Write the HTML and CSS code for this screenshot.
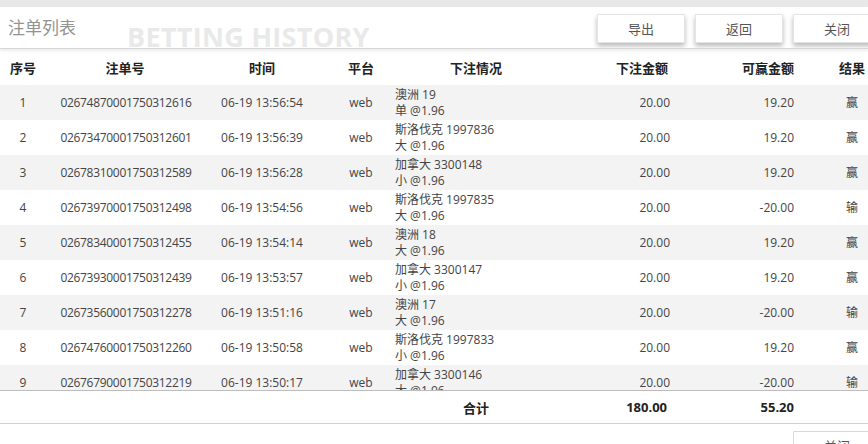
FILE: index.html
```html
<!DOCTYPE html>
<html lang="zh">
<head>
<meta charset="utf-8">
<title>注单列表</title>
<link rel="stylesheet" href="styles.css">
</head>
<body>
<div class="topbar"></div>
<div class="header">
  <div class="title">注单列表</div>
  <div class="watermark">BETTING HISTORY</div>
  <div class="spacer"></div>
  <div class="actions">
    <button class="btn">导出</button>
    <button class="btn">返回</button>
    <button class="btn">关闭</button>
  </div>
</div>
<table class="grid head">
  <colgroup><col class="c1"><col class="c2"><col class="c3"><col class="c4"><col class="c5"><col class="c6"><col class="c7"><col class="c8"></colgroup>
  <thead>
    <tr><th>序号</th><th>注单号</th><th>时间</th><th class="plat">平台</th><th>下注情况</th><th class="num">下注金额</th><th class="num">可赢金额</th><th>结果</th></tr>
  </thead>
</table>
<div class="scroll">
<table class="grid body">
  <colgroup><col class="c1"><col class="c2"><col class="c3"><col class="c4"><col class="c5"><col class="c6"><col class="c7"><col class="c8"></colgroup>
  <tbody>
    <tr><td>1</td><td class="no">02674870001750312616</td><td>06-19 13:56:54</td><td class="plat">web</td><td class="bet"><span>澳洲 19</span><span>单 @1.96</span></td><td class="num">20.00</td><td class="num">19.20</td><td>赢</td></tr>
    <tr><td>2</td><td class="no">02673470001750312601</td><td>06-19 13:56:39</td><td class="plat">web</td><td class="bet"><span>斯洛伐克 1997836</span><span>大 @1.96</span></td><td class="num">20.00</td><td class="num">19.20</td><td>赢</td></tr>
    <tr><td>3</td><td class="no">02678310001750312589</td><td>06-19 13:56:28</td><td class="plat">web</td><td class="bet"><span>加拿大 3300148</span><span>小 @1.96</span></td><td class="num">20.00</td><td class="num">19.20</td><td>赢</td></tr>
    <tr><td>4</td><td class="no">02673970001750312498</td><td>06-19 13:54:56</td><td class="plat">web</td><td class="bet"><span>斯洛伐克 1997835</span><span>大 @1.96</span></td><td class="num">20.00</td><td class="num">-20.00</td><td>输</td></tr>
    <tr><td>5</td><td class="no">02678340001750312455</td><td>06-19 13:54:14</td><td class="plat">web</td><td class="bet"><span>澳洲 18</span><span>大 @1.96</span></td><td class="num">20.00</td><td class="num">19.20</td><td>赢</td></tr>
    <tr><td>6</td><td class="no">02673930001750312439</td><td>06-19 13:53:57</td><td class="plat">web</td><td class="bet"><span>加拿大 3300147</span><span>小 @1.96</span></td><td class="num">20.00</td><td class="num">19.20</td><td>赢</td></tr>
    <tr><td>7</td><td class="no">02673560001750312278</td><td>06-19 13:51:16</td><td class="plat">web</td><td class="bet"><span>澳洲 17</span><span>大 @1.96</span></td><td class="num">20.00</td><td class="num">-20.00</td><td>输</td></tr>
    <tr><td>8</td><td class="no">02674760001750312260</td><td>06-19 13:50:58</td><td class="plat">web</td><td class="bet"><span>斯洛伐克 1997833</span><span>小 @1.96</span></td><td class="num">20.00</td><td class="num">19.20</td><td>赢</td></tr>
    <tr><td>9</td><td class="no">02676790001750312219</td><td>06-19 13:50:17</td><td class="plat">web</td><td class="bet"><span>加拿大 3300146</span><span>大 @1.96</span></td><td class="num">20.00</td><td class="num">-20.00</td><td>输</td></tr>
  </tbody>
</table>
</div>
<table class="grid foot">
  <colgroup><col class="c1"><col class="c2"><col class="c3"><col class="c4"><col class="c5"><col class="c6"><col class="c7"><col class="c8"></colgroup>
  <tbody>
    <tr><td></td><td></td><td></td><td></td><td class="total">合计</td><td class="num">180.00</td><td class="num">55.20</td><td></td></tr>
  </tbody>
</table>
<div class="bottom">
  <button class="btn">关闭</button>
</div>
</body>
</html>
```

FILE: styles.css
```css
html, body {
  margin: 0;
  padding: 0;
  background: #ffffff;
  overflow: hidden;
  width: 868px;
  height: 444px;
}
body {
  font-family: "Open Sans", "Noto Sans CJK SC", sans-serif;
  font-size: 12px;
  color: #444;
}
.topbar {
  height: 7px;
  background: #e8e8e8;
}
.header {
  height: 41px;
  display: flex;
  align-items: flex-start;
  border-bottom: 1px solid #d6d6d6;
  box-shadow: 0 2px 3px rgba(0, 0, 0, 0.08);
  position: relative;
  z-index: 2;
  background: #fff;
  overflow: hidden;
}
.title {
  font-family: "Noto Sans CJK SC", sans-serif;
  font-size: 17px;
  line-height: 20px;
  color: #939393;
  margin-left: 8px;
  margin-top: 10px;
  flex-shrink: 0;
}
.watermark {
  font-family: "Open Sans", "DejaVu Sans", sans-serif;
  font-weight: 700;
  font-size: 27px;
  line-height: 30px;
  letter-spacing: 0.3px;
  color: #e9e9e9;
  margin-left: 51px;
  margin-top: 15px;
  flex-shrink: 0;
  white-space: nowrap;
}
.spacer { flex: 1; }
.actions {
  display: flex;
  gap: 10px;
  margin-right: -13px;
  margin-top: 7px;
  flex-shrink: 0;
}
.btn {
  width: 88px;
  height: 29px;
  background: #fff;
  border: 1px solid #e4e4e4;
  border-radius: 1px;
  box-shadow: 0 3px 5px rgba(0, 0, 0, 0.28);
  font-family: "Noto Sans CJK SC", sans-serif;
  font-size: 13px;
  color: #555;
  padding: 0;
}
.grid {
  border-collapse: collapse;
  table-layout: fixed;
  width: 884px;
}
.c1 { width: 46px; }
.c2 { width: 158px; }
.c3 { width: 116px; }
.c4 { width: 74px; }
.c5 { width: 164px; }
.c6 { width: 112px; }
.c7 { width: 150px; }
.c8 { width: 64px; }
.grid th, .grid td {
  padding: 0;
  text-align: center;
  white-space: nowrap;
  overflow: hidden;
}
.grid th {
  height: 36px;
  font-family: "Noto Sans CJK SC", sans-serif;
  font-weight: 700;
  font-size: 13px;
  color: #222;
}
.grid .plat { padding-left: 8px; }
.grid .num { text-align: right; }
.grid th.num:nth-child(6) { padding-right: 2px; }
.grid td.num:nth-child(6) { padding-right: 0; }
.grid td.num:nth-child(7), .grid th.num:nth-child(7) { padding-right: 26px; }
.body tr { height: 35px; }
.body td {
  height: 35px;
  line-height: 16px;
}
.body td.no { letter-spacing: -0.3px; padding-left: 2px; }
.body tr:nth-child(odd) td { background: #f3f3f3; }
.body td.bet {
  text-align: left;
  padding-left: 1px;
}
.body td.bet span {
  display: block;
  height: 16px;
  line-height: 16px;
  overflow: visible;
}
.scroll {
  height: 305px;
  overflow: hidden;
  border-bottom: 1px solid #bdbdbd;
}
.foot td {
  height: 32px;
  font-weight: 700;
  font-size: 13px;
  color: #222;
  border-bottom: 1px solid #d0d0d0;
}
.foot td.total {
  font-family: "Noto Sans CJK SC", sans-serif;
  padding-left: 0;
}
.foot td.num:nth-child(6) { padding-right: 3px; }
.bottom {
  display: flex;
  justify-content: flex-end;
  padding-top: 7px;
  margin-right: -13px;
}
.bottom .btn {
  height: 29px;
  box-shadow: none;
  border-color: #d8d8d8;
}
```
